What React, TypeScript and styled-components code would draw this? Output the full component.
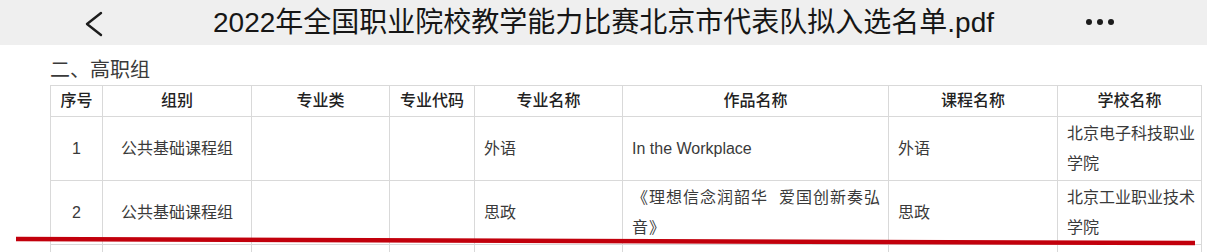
import React from "react";
import styled, { createGlobalStyle } from "styled-components";

const GlobalStyle = createGlobalStyle`
  html, body {
    margin: 0;
    padding: 0;
    background: #ffffff;
  }
  body {
    font-family: "Liberation Sans", "Noto Sans CJK SC", sans-serif;
  }
`;

const Screen = styled.div`
  position: relative;
  width: 1207px;
  height: 252px;
  overflow: hidden;
  background: #ffffff;
`;

const TopBar = styled.header`
  display: grid;
  grid-template-columns: 1fr auto 1fr;
  align-items: center;
  height: 45px;
  background: #efefef;
`;

const BackSlot = styled.div`
  display: flex;
  align-items: center;
  padding-left: 84px;
  padding-top: 2px;
`;

const MoreSlot = styled.div`
  display: flex;
  justify-content: flex-end;
  align-items: center;
  gap: 5px;
  padding-right: 93px;
  padding-bottom: 2px;
`;

const Dot = styled.span`
  width: 6px;
  height: 6px;
  border-radius: 50%;
  background: #1c1c1c;
`;

const Title = styled.h1`
  margin: 0;
  font-family: "Liberation Sans", "Noto Sans CJK SC", sans-serif;
  font-size: 28px;
  font-weight: 400;
  line-height: 45px;
  color: #161616;
  white-space: nowrap;
`;

const Sheet = styled.main`
  padding: 12px 0 0 50px;
`;

const SectionTitle = styled.h2`
  margin: 0 0 4px;
  font-family: "Noto Sans CJK SC", sans-serif;
  font-size: 20px;
  font-weight: 400;
  line-height: 24px;
  color: #3a3a3a;
`;

const Table = styled.table`
  border-collapse: collapse;
  table-layout: fixed;
  width: 1151px;
  font-family: "Liberation Sans", "Noto Sans CJK SC", sans-serif;
  font-size: 16px;
  font-weight: 400;
  line-height: 30px;
  color: #3a3a3a;
`;

const HeadCell = styled.th`
  height: 30px;
  padding: 0;
  border: 1px solid #d9d9d9;
  font-weight: 500;
  color: #222222;
  text-align: center;
  vertical-align: middle;
`;

const Cell = styled.td<{ $center?: boolean; $spaced?: boolean }>`
  height: 63px;
  padding: 0 4px 0 ${(p) => (p.$center ? "4px" : "9px")};
  border: 1px solid #d9d9d9;
  text-align: ${(p) => (p.$center ? "center" : "left")};
  vertical-align: middle;
  letter-spacing: ${(p) => (p.$spaced ? "1px" : "0")};
`;

const Annotation = styled.svg`
  position: absolute;
  left: 0;
  top: 0;
  width: 1207px;
  height: 252px;
  pointer-events: none;
`;

const columns = [52, 149, 138, 85, 148, 266, 169, 144];
const headers = ["序号", "组别", "专业类", "专业代码", "专业名称", "作品名称", "课程名称", "学校名称"];

type Row = {
  no: string;
  group: string;
  major: string;
  work: string;
  workSpaced?: boolean;
  course: string;
  school: string;
};

const rows: Row[] = [
  {
    no: "1",
    group: "公共基础课程组",
    major: "外语",
    work: "In the Workplace",
    course: "外语",
    school: "北京电子科技职业学院",
  },
  {
    no: "2",
    group: "公共基础课程组",
    major: "思政",
    work: "《理想信念润韶华\u00a0\u00a0爱国创新奏弘音》",
    workSpaced: true,
    course: "思政",
    school: "北京工业职业技术学院",
  },
  {
    no: "",
    group: "",
    major: "",
    work: "",
    course: "",
    school: "",
  },
];

function BackIcon() {
  return (
    <svg width="20" height="26" viewBox="0 0 20 26" fill="none">
      <polyline
        points="17,2 3,13 17,24"
        stroke="#1c1c1c"
        strokeWidth="2.4"
        strokeLinecap="round"
        strokeLinejoin="round"
      />
    </svg>
  );
}

export default function App() {
  return (
    <Screen>
      <GlobalStyle />
      <TopBar>
        <BackSlot>
          <BackIcon />
        </BackSlot>
        <Title>2022年全国职业院校教学能力比赛北京市代表队拟入选名单.pdf</Title>
        <MoreSlot>
          <Dot />
          <Dot />
          <Dot />
        </MoreSlot>
      </TopBar>
      <Sheet>
        <SectionTitle>二、高职组</SectionTitle>
        <Table>
          <colgroup>
            {columns.map((w, i) => (
              <col key={i} style={{ width: w }} />
            ))}
          </colgroup>
          <thead>
            <tr>
              {headers.map((h) => (
                <HeadCell key={h}>{h}</HeadCell>
              ))}
            </tr>
          </thead>
          <tbody>
            {rows.map((r, i) => (
              <tr key={i}>
                <Cell $center>{r.no}</Cell>
                <Cell $center>{r.group}</Cell>
                <Cell />
                <Cell />
                <Cell>{r.major}</Cell>
                <Cell $spaced={r.workSpaced}>{r.work}</Cell>
                <Cell>{r.course}</Cell>
                <Cell>{r.school}</Cell>
              </tr>
            ))}
          </tbody>
        </Table>
      </Sheet>
      <Annotation viewBox="0 0 1207 252">
        <line x1="16" y1="239" x2="1195" y2="243" stroke="#c2000c" strokeWidth="4.5" />
      </Annotation>
    </Screen>
  );
}
